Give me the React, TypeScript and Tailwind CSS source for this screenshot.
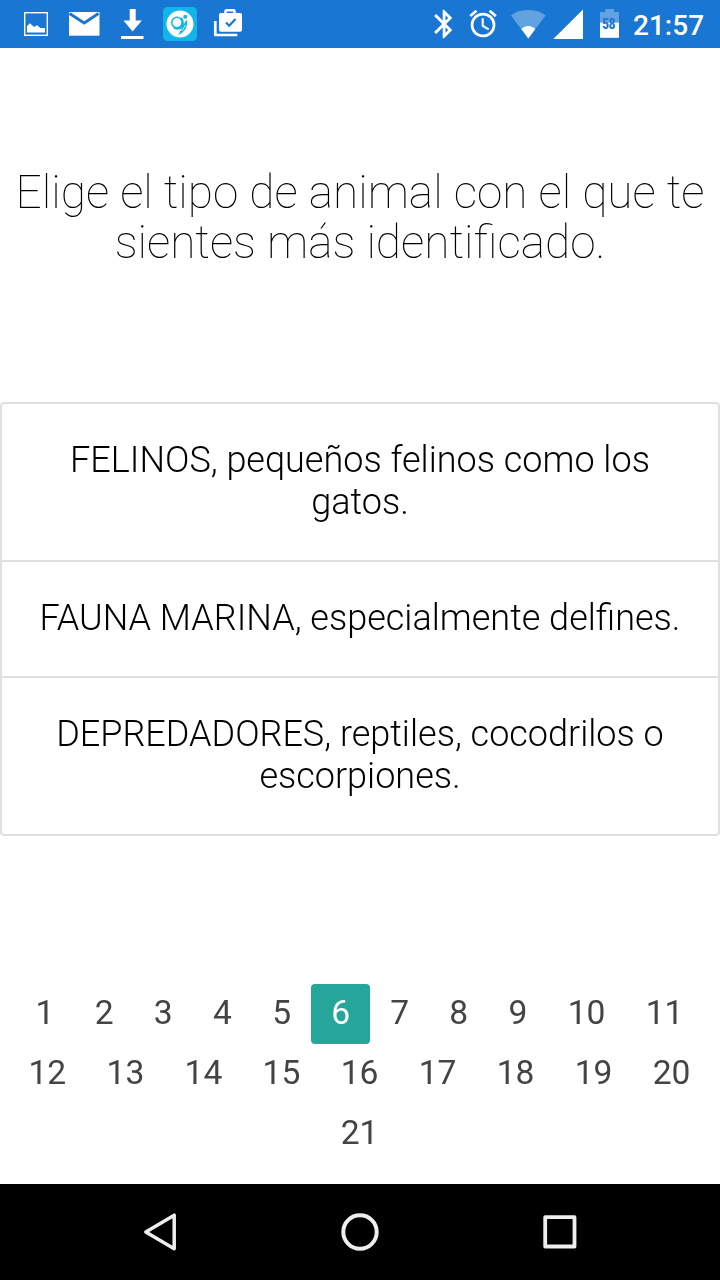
const answers = [
  "FELINOS, pequeños felinos como los gatos.",
  "FAUNA MARINA, especialmente delfines.",
  "DEPREDADORES, reptiles, cocodrilos o escorpiones.",
];

const pages = Array.from({ length: 21 }, (_, i) => i + 1);
const current = 6;

function StatusBar() {
  return (
    <header className="flex h-12 shrink-0 bg-[#1976d2] text-white">
      <svg className="h-12 w-[58px]" viewBox="0 0 58 48" fill="none">
        <rect x="24.7" y="12.7" width="22.6" height="22.6" stroke="#fff" strokeWidth="1.4" />
        <path d="M27 32.500V26l3-2.700 4 3.700 3-1.700 3.500 2.700h4.500v4.500z" fill="#fff" />
      </svg>
      <svg className="h-12 w-[52px]" viewBox="58 0 52 48" fill="none">
        <path d="M69 12h30.500v23.700H69z" fill="#fff" />
        <path d="M69.500 13.500 84.200 23 98.500 13.500" stroke="#1976d2" strokeWidth="2.8" />
      </svg>
      <svg className="h-12 w-[45px]" viewBox="110 0 45 48" fill="#fff">
        <path d="M129.700 9h6v11.500h6.200L132.600 31.500 123.500 20.500h6.200zM121 36h22.500v3H121z" />
      </svg>
      <svg className="h-12 w-[50px]" viewBox="155 0 50 48" fill="none">
        <rect x="163" y="7" width="34" height="34" rx="4.500" fill="#12b5ea" />
        <circle cx="180" cy="24" r="13.500" fill="#fff" />
        <circle cx="177" cy="22.500" r="5.200" stroke="#12b5ea" strokeWidth="1.500" />
        <path d="M180.800 18c3.200 3.500 2.500 8.500-1.500 10-2 .7-4 .3-5.500-.7" stroke="#12b5ea" strokeWidth="2.500" />
        <circle cx="185.200" cy="16.700" r="2" fill="#12b5ea" />
        <path d="M186.500 19.500c2 6-.8 12.500-8.500 15.500 2-2.700 3.200-5 4.200-8z" fill="#12b5ea" />
        <path d="m182 31 3.500-6" stroke="#fff" strokeWidth=".8" />
      </svg>
      <svg className="h-12 w-[45px]" viewBox="205 0 45 48" fill="none">
        <path d="M215.300 21v14h22" stroke="#fff" strokeWidth="2.700" strokeLinejoin="round" />
        <path d="M225.500 13.500v-2.300q0-1 1-1h7q1 0 1 1v2.300" stroke="#fff" strokeWidth="2.500" />
        <rect x="219" y="13" width="23" height="18.700" rx="1.800" fill="#fff" />
        <path d="m226 22.500 3.200 3.200 6.300-6.700" stroke="#1976d2" strokeWidth="2.200" />
      </svg>
      <div className="grow" />
      <svg className="h-12 w-[35px]" viewBox="425 0 35 48" fill="#fff">
        <path transform="translate(427 6.900) scale(1.425)" d="M17.710 7.710 12 2h-1v7.590L6.410 5 5 6.410 10.590 12 5 17.590 6.410 19 11 14.410V22h1l5.710-5.710-4.300-4.290 4.300-4.290zM13 5.830l1.880 1.880L13 9.590V5.830zm1.880 10.460L13 18.170v-3.760l1.880 1.880z" />
      </svg>
      <svg className="h-12 w-[45px]" viewBox="460 0 45 48" fill="#fff">
        <path transform="translate(466.600 7.200) scale(1.370)" d="m22 5.720-4.600-3.860-1.290 1.530 4.600 3.860L22 5.720zM7.880 3.390 6.600 1.860 2 5.710l1.290 1.530 4.590-3.850zM12.500 8H11v6l4.750 2.850.75-1.230-4-2.370V8zM12 4c-4.970 0-9 4.030-9 9s4.020 9 9 9a9 9 0 0 0 0-18zm0 16c-3.870 0-7-3.130-7-7s3.130-7 7-7 7 3.130 7 7-3.130 7-7 7z" />
      </svg>
      <svg className="h-12 w-[45px]" viewBox="505 0 45 48" fill="#fff">
        <path d="M528.300 38.500 511 15.500c9-7.300 25.500-7.300 34.500 0z" opacity=".32" />
        <path d="m528.300 38.500-7-9.500c4-4 10-4 14 0z" />
      </svg>
      <svg className="h-12 w-[40px]" viewBox="550 0 40 48" fill="#fff">
        <path d="M583 9.500V39h-29.700z" />
      </svg>
      <div className="relative h-12 w-[40px]">
        <svg className="h-12 w-[40px]" viewBox="590 0 40 48" fill="#fff">
          <path d="M600 22.500V12h5.300V9h8.700v3h5v10.500z" opacity=".32" />
          <path d="M600 22.500h19v15.300h-19z" />
        </svg>
        <span className="absolute top-[17px] left-[12px] font-['Roboto_Condensed','Roboto',sans-serif] text-[14px] leading-[14px] font-bold tracking-[-0.5px] text-[#1976d2]">
          58
        </span>
      </div>
      <time className="w-[90px] pl-[3px] text-[28px] leading-[52px] font-medium">21:57</time>
    </header>
  );
}

function NavBar() {
  return (
    <nav className="flex h-24 shrink-0 items-center justify-center gap-[152px] bg-black">
      <svg className="size-12" viewBox="0 0 48 48" fill="none" stroke="#eee" strokeWidth="3.500" strokeLinejoin="round">
        <path d="M9.800 24 38.200 7.200v33.600z" />
      </svg>
      <svg className="size-12" viewBox="0 0 48 48" fill="none" stroke="#eee" strokeWidth="4">
        <circle cx="24" cy="24" r="16.700" />
      </svg>
      <svg className="size-12" viewBox="0 0 48 48" fill="none" stroke="#eee" strokeWidth="3.800" strokeLinejoin="round">
        <rect x="9.200" y="9.200" width="29.300" height="29.300" />
      </svg>
    </nav>
  );
}

export default function App() {
  return (
    <div className="flex h-[1280px] w-[720px] flex-col overflow-hidden bg-white font-['Roboto',sans-serif]">
      <StatusBar />
      <main className="flex grow flex-col text-center will-change-transform">
        <h1 className="mt-[119px] text-[46px] leading-[50px] font-thin text-black">
          Elige el tipo de animal con el que te
          <br />
          sientes más identificado.
        </h1>
        <ul className="mt-[135px] divide-y-2 divide-[#e0e0e0] rounded-[4px] border-2 border-[#e0e0e0] text-[36px] leading-[42px] font-light text-black">
          {answers.map((answer) => (
            <li key={answer} className="px-[36px] pt-[35px] pb-[37px]">
              {answer}
            </li>
          ))}
        </ul>
        <ul className="mt-[148px] flex flex-wrap justify-center pr-px text-[33.600px] leading-[58px] text-[#444]">
          {pages.map((page) => (
            <li
              key={page}
              className={page === current ? "h-[60px] rounded-[4px] bg-[#26a69a] px-5 text-white" : "h-[60px] px-[20.150px]"}
            >
              {page}
            </li>
          ))}
        </ul>
      </main>
      <NavBar />
    </div>
  );
}
